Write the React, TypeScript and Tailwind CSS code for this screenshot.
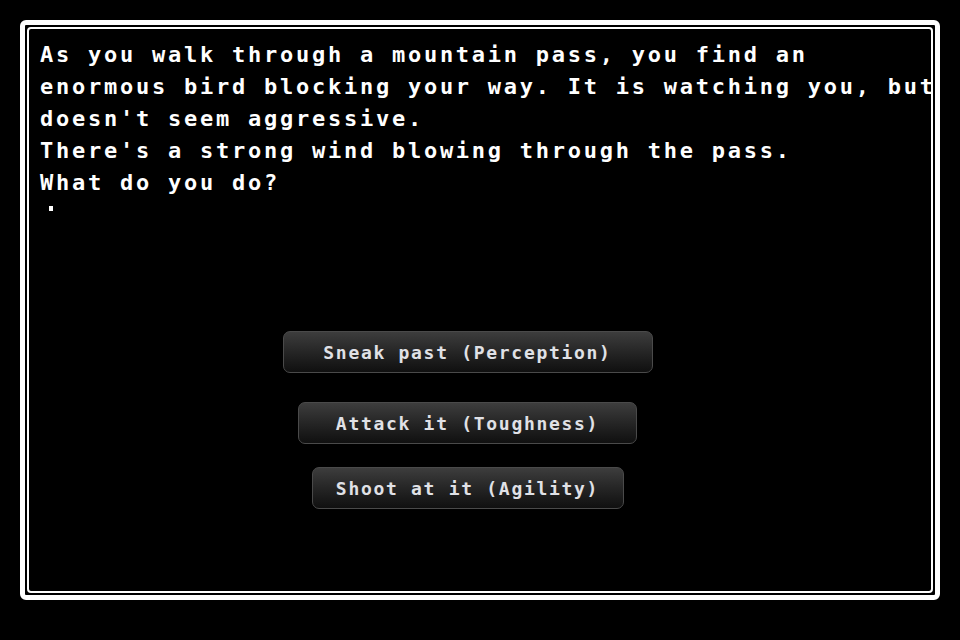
import React from "react";

const story = [
  "As you walk through a mountain pass, you find an",
  "enormous bird blocking your way. It is watching you, but",
  "doesn't seem aggressive.",
  "There's a strong wind blowing through the pass.",
  "What do you do?",
];

const choices = [
  { label: "Sneak past (Perception)", width: "w-[370px]", gap: "mt-0" },
  { label: "Attack it (Toughness)", width: "w-[339px]", gap: "mt-[29px]" },
  { label: "Shoot at it (Agility)", width: "w-[312px]", gap: "mt-[23px]" },
];

export default function App() {
  return (
    <div className="w-[960px] h-[640px] bg-black p-5 font-['DejaVu_Sans_Mono','Liberation_Mono',monospace]">
      <div className="h-[580px] rounded-md border-[5px] border-white bg-black p-[2px]">
        <div className="h-full rounded border-2 border-white bg-black flex flex-col">
          <div className="pl-[11px] pt-[10px] text-[22px] leading-[32px] font-bold tracking-[2.75px] text-white whitespace-pre">
            {story.map((line, i) => (
              <div key={i}>{line}</div>
            ))}
            {/* input cursor */}
            <div className="h-[32px] pl-[9px] pt-[7px]">
              <div className="w-[4px] h-[5px] bg-white" />
            </div>
          </div>

          <div className="mt-[100px] flex flex-col items-center pr-[25px]">
            {choices.map((c) => (
              <button
                key={c.label}
                className={`${c.width} ${c.gap} h-[42px] rounded-[7px] border border-[#4a4a4a] bg-gradient-to-b from-[#3d3d3d] to-[#101010] text-[18px] font-bold tracking-[1.7px] text-[#e0e1e6] flex items-center justify-center`}
              >
                {c.label}
              </button>
            ))}
          </div>
        </div>
      </div>
    </div>
  );
}
